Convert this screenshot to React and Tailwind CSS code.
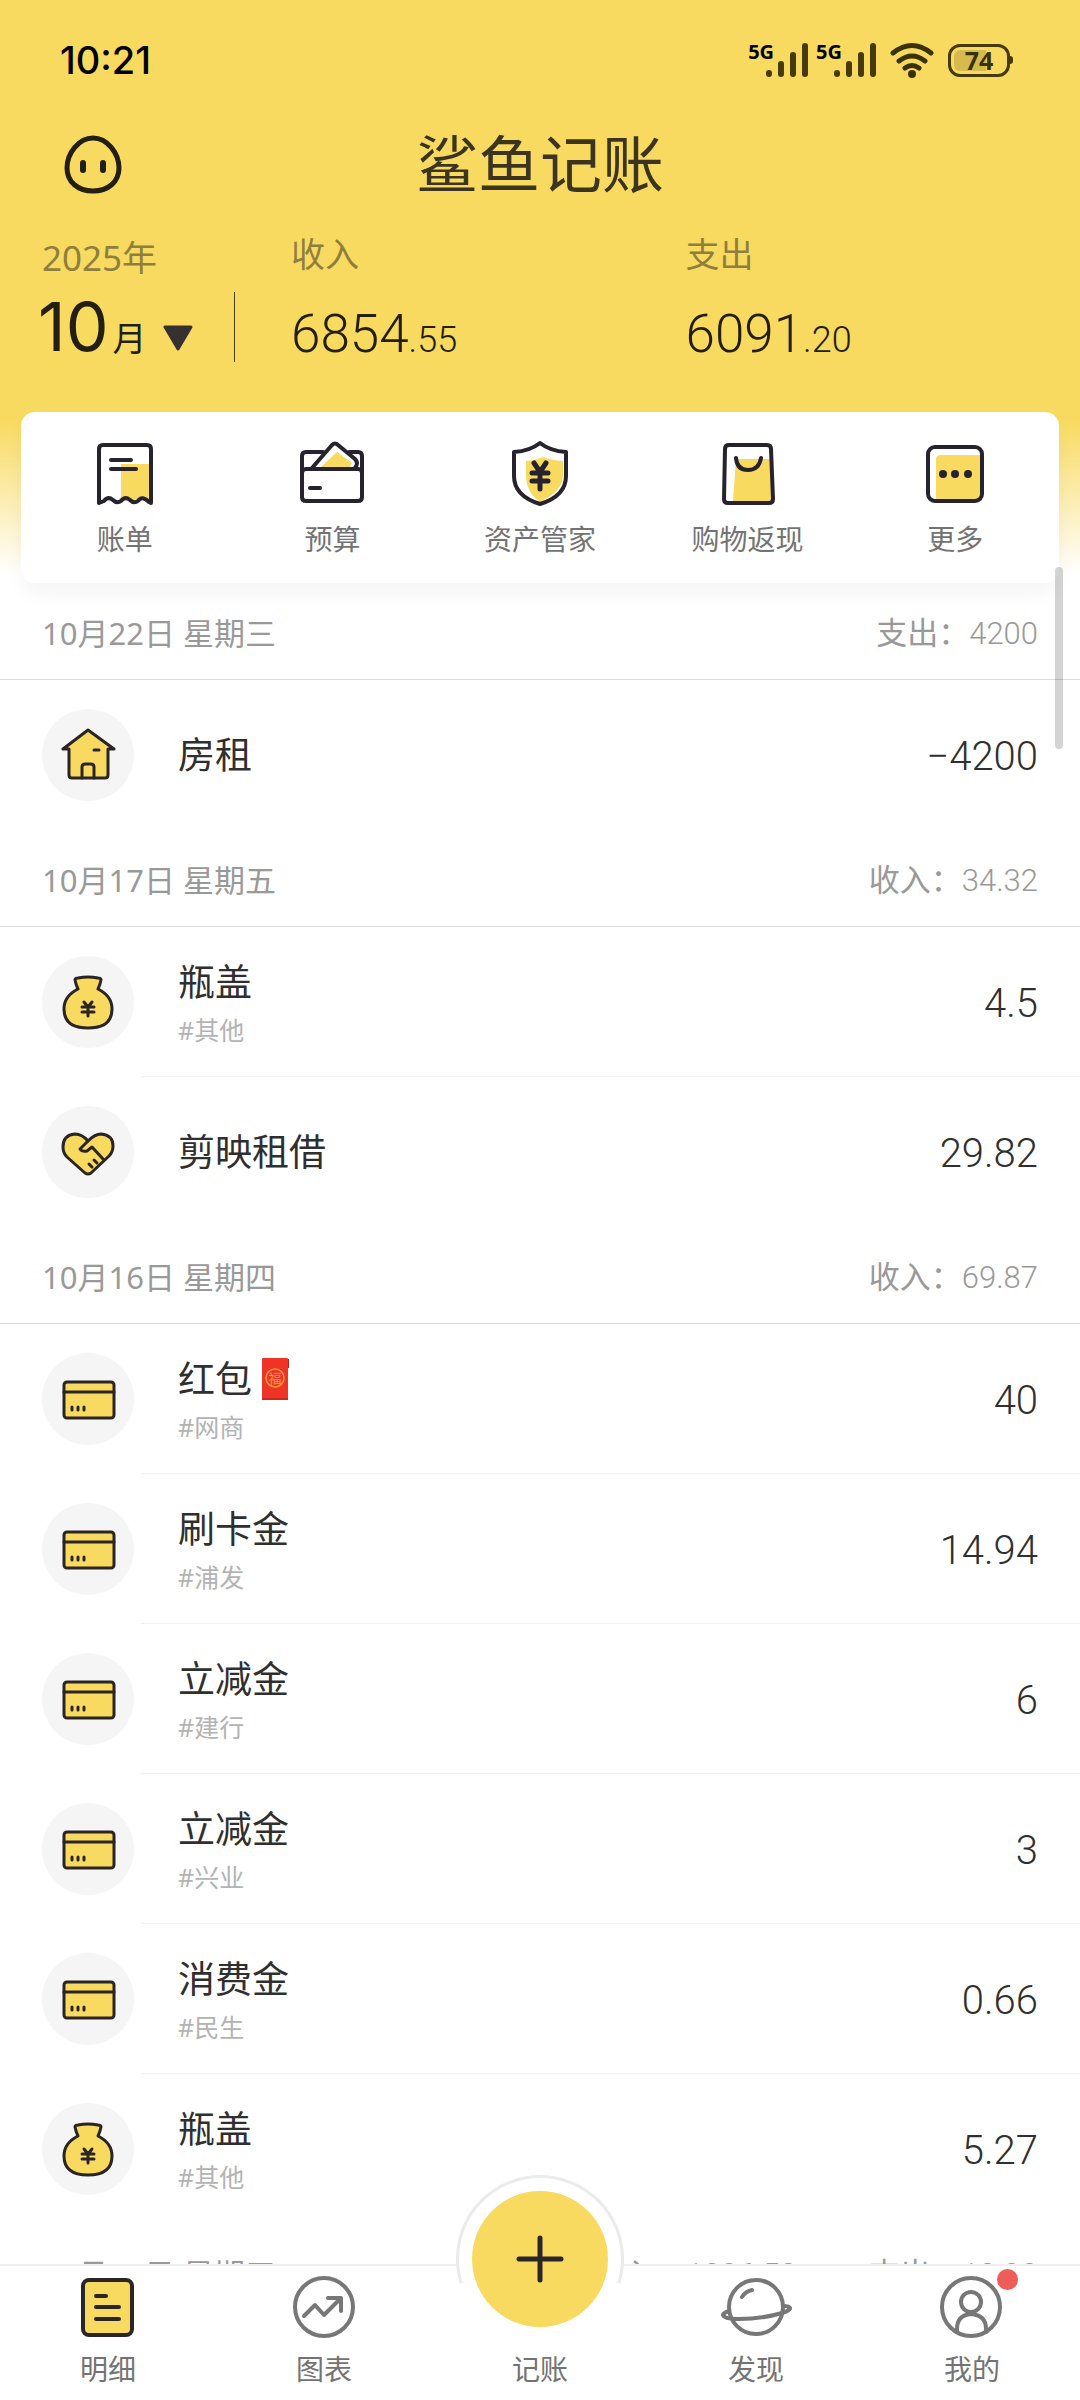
import React, { useState } from "react";

const CATEGORY_ICONS = {
  house: (
    <>
      <path d="M9 22v26q0 3 3 3h33q3 0 3-3V22h6L28 3 3 22z" fill="#f8da60" />
      <path d="M22 51V40q0-3 3-3h6q3 0 3 3v11M34 23h5" />
    </>
  ),
  bag: (
    <>
      <path d="M15 6q0-2 3-2 10-2 20 0 3 0 3 2-1 5-3 9 14 7 14 20 0 19-24 19T4 35q0-13 14-20-2-4-3-9z" fill="#f8da60" />
      <path d="M24 28l4 5 4-5M22 33h12M22 38h12M28 33v9" />
    </>
  ),
  heart: (
    <>
      <path d="M28 17q-6-7-13-7Q3 11 3 23q0 6 4 10l18 16q3 2 6 0l18-17q4-4 4-10 0-11-12-12-6 0-13 7z" fill="#f8da60" />
      <path d="M28 17l-8 8q2 3 7 2l5-4 11 12M34 36l3 3M29 40l3 3" />
    </>
  ),
  card: (
    <>
      <rect x="4" y="11" width="50" height="36" rx="3" fill="#f8da60" />
      <path d="M4 21h50M12 36v3M18 36v3M24 36v3" />
    </>
  ),
};

const days = [
  {
    date: "10月22日 星期三",
    totals: [{ label: "支出：", value: "4200" }],
    records: [{ icon: "house", name: "房租", amount: "−4200" }],
  },
  {
    date: "10月17日 星期五",
    totals: [{ label: "收入：", value: "34.32" }],
    records: [
      { icon: "bag", name: "瓶盖", tag: "#其他", amount: "4.5" },
      { icon: "heart", name: "剪映租借", amount: "29.82" },
    ],
  },
  {
    date: "10月16日 星期四",
    totals: [{ label: "收入：", value: "69.87" }],
    records: [
      { icon: "card", name: "红包", tag: "#网商", amount: "40", envelope: true },
      { icon: "card", name: "刷卡金", tag: "#浦发", amount: "14.94" },
      { icon: "card", name: "立减金", tag: "#建行", amount: "6" },
      { icon: "card", name: "立减金", tag: "#兴业", amount: "3" },
      { icon: "card", name: "消费金", tag: "#民生", amount: "0.66" },
      { icon: "bag", name: "瓶盖", tag: "#其他", amount: "5.27" },
    ],
  },
  {
    date: "10月15日 星期三",
    totals: [
      { label: "收入：", value: "1286.50" },
      { label: "支出：", value: "12.98" },
    ],
    records: [],
  },
];

const shortcuts = [
  {
    label: "账单",
    icon: (
      <>
        <path d="M28 22h29v38l-8-4-8 4-9-4-4 2z" fill="#f8da60" stroke="none" />
        <path d="M6 61V7q0-4 4-4h44q4 0 4 4v54l-2-1q-7-7-11-1-4 3-8-1-5-4-9 1-4 3-8-1-5-4-9 1zM18 18h20M18 27h25" />
      </>
    ),
  },
  {
    label: "预算",
    icon: (
      <>
        <path d="M20 26L37 10l15 11-3 5z" fill="#f8da60" stroke="none" />
        <path d="M23 10H6q-4 0-4 4v41q0 4 4 4h52q4 0 4-4V14q0-4-4-4h-9M2 31q0-4 4-4h52q4 0 4 4M12 26L32 3q3-3 6 0l17 14q4 4 0 9M10 46h10" />
      </>
    ),
  },
  {
    label: "资产管家",
    icon: (
      <>
        <path d="M18 19q10-1 17-4 8 3 20 4v14q0 16-23 27Q18 50 18 33z" fill="#f8da60" stroke="none" />
        <path d="M32 1q10 8 26 9v24q0 20-26 28Q6 54 6 34V10q16-1 26-9z" />
        <path d="M26 21l6 9 6-9M24 31h16M24 39h16M32 31v16" strokeWidth="5" />
      </>
    ),
  },
  {
    label: "购物返现",
    icon: (
      <>
        <path d="M20 17h35l2 42H17z" fill="#f8da60" stroke="none" />
        <path d="M13 3h38q4 0 4 4l2 50q0 4-4 4H12q-4 0-4-4L9 7q0-4 4-4zM20 16q1 12 12 12t13-12" />
      </>
    ),
  },
  {
    label: "更多",
    icon: (
      <>
        <path d="M13 59V18q0-5 5-5h41v46z" fill="#f8da60" stroke="none" />
        <rect x="5" y="5" width="54" height="54" rx="7" />
        <g fill="#26232f" stroke="none">
          <circle cx="20" cy="32" r="4" />
          <circle cx="32" cy="32" r="4" />
          <circle cx="45" cy="32" r="4" />
        </g>
      </>
    ),
  },
];

const tabs = [
  {
    label: "明细",
    icon: (
      <g stroke="#2b2626">
        <rect x="11" y="5" width="49" height="55" rx="6" fill="#f8da60" />
        <path d="M24 21h10M24 32h23M24 44h23" />
      </g>
    ),
  },
  {
    label: "图表",
    icon: (
      <>
        <circle cx="36" cy="32" r="29" />
        <path d="M16 41l11-11 9 10 16-16M40 23h13v13" />
      </>
    ),
  },
  { label: "记账", add: true },
  {
    label: "发现",
    icon: (
      <>
        <circle cx="36" cy="32" r="27" />
        <path d="M9 36q-6 2-6 4 1 4 16 4 23 0 43-6 9-3 8-5-1-2-7-2M22 22q4-6 10-7" />
      </>
    ),
  },
  {
    label: "我的",
    dot: true,
    icon: (
      <>
        <circle cx="35" cy="32" r="29" />
        <circle cx="35" cy="27" r="10" />
        <path d="M21 57v-3q0-14 14-15 15 1 15 15v3" />
      </>
    ),
  },
];

const Signal = () => (
  <div className="flex items-start">
    <span className="text-xl font-bold leading-5">5G</span>
    <svg className="-ml-2 w-[42px] h-9" viewBox="0 0 42 36" stroke="#453a08" strokeWidth="6" strokeLinecap="round">
      <path d="M3 31v1M15 22v10M27 13v19M39 4v28" />
    </svg>
  </div>
);

const StatusBar = () => (
  <div className="h-[120px] pl-[60px] pr-[67px] flex items-center justify-between text-black">
    <time className="font-[Inter] text-[38px] font-medium">10:21</time>
    <div className="flex items-center gap-2">
      <Signal />
      <Signal />
      <svg className="ml-1.5 w-11 h-9" viewBox="0 0 44 36" fill="none" stroke="#3b3106" strokeWidth="5" strokeLinecap="round">
        <path d="M3 11q19-15 38 0M9 19q13-10 26 0M15 26q7-5 14 0" />
        <circle cx="22" cy="32" r="4" fill="#3b3106" stroke="none" />
      </svg>
      <div className="ml-1.5 flex items-center">
        <div className="relative w-[62px] h-[33px] rounded-xl border-3 border-[#453a08] flex items-center justify-center">
          <div className="absolute left-[3px] inset-y-[3px] w-8 rounded-l-md bg-[#d6ba4e]" />
          <span className="relative text-[25px] leading-none font-bold text-[#3b3106]">74</span>
        </div>
        <div className="w-[3px] h-2 rounded-r bg-[#453a08]" />
      </div>
    </div>
  </div>
);

const Summary = ({ label, whole, cents }) => (
  <div className="flex-1 flex flex-col gap-6">
    <span className="text-[34px] leading-[48px] text-[#8f7f3e]">{label}</span>
    <span className="h-16 font-[Roboto] font-light text-[53px] leading-[64px] text-[#241d08]">
      {whole}
      <span className="text-[36px]">{cents}</span>
    </span>
  </div>
);

const RedEnvelope = () => (
  <svg className="w-7 h-[42px]" viewBox="0 0 28 42">
    <path d="M24 1h3v9h-3z" fill="#b3241d" />
    <rect width="26" height="42" rx="1" fill="#ef3427" />
    <path d="M0 41h26" stroke="#c4281f" strokeWidth="2" />
    <circle cx="13" cy="20" r="9" fill="none" stroke="#f99a3c" strokeWidth="1.5" />
    <text x="13" y="25" fontSize="13" textAnchor="middle" fill="#f99a3c">福</text>
  </svg>
);

const RecordRow = ({ record, last }) => (
  <li className="relative h-[150px] px-[42px] flex items-center">
    <div className="size-[92px] rounded-full bg-[#f5f5f5] flex items-center justify-center">
      <svg
        className="size-14"
        viewBox="0 0 56 56"
        fill="none"
        stroke="#2a2422"
        strokeWidth="3"
        strokeLinecap="round"
        strokeLinejoin="round"
      >
        {CATEGORY_ICONS[record.icon]}
      </svg>
    </div>
    <div className="ml-11 flex-1">
      <div className="flex items-center gap-2.5 text-[37px] leading-[52px] text-[#2f2f2f]">
        {record.name}
        {record.envelope && <RedEnvelope />}
      </div>
      {record.tag && <div className="mt-1 text-[25px] leading-9 text-[#b3b3b3]">{record.tag}</div>}
    </div>
    <span className="pt-1 font-[Roboto] font-light text-[40px] text-[#2f2f2f]">{record.amount}</span>
    {!last && <div className="absolute bottom-0 left-[141px] right-0 h-px bg-[#f2f2f2]" />}
  </li>
);

const App = () => {
  const [activeTab, setActiveTab] = useState("明细");

  return (
    <div className="h-screen flex flex-col bg-white font-['Noto_Sans','Noto_Sans_CJK_SC',sans-serif]">
      <header className="relative z-10 bg-[linear-gradient(#f8da60_420px,#fff_575px)]">
        <StatusBar />

        <div className="relative h-[88px] flex items-center justify-center">
          <button className="absolute left-[64px]" aria-label="头像">
            <svg className="w-[58px] h-[60px]" viewBox="0 0 58 60" fill="none" stroke="#231f12" strokeLinecap="round">
              <path d="M29 4c14 0 26 15 26 30 0 14-11 23-26 23S3 48 3 34C3 19 15 4 29 4z" strokeWidth="5" />
              <path d="M19 29v7M39 29v7" strokeWidth="6" />
            </svg>
          </button>
          <h1 className="text-[62px] leading-none text-[#3a3420]">鲨鱼记账</h1>
        </div>

        <div className="mt-[22px] flex items-end">
          <button className="relative w-[291px] pl-[42px] flex flex-col items-start gap-1">
            <span className="text-[35px] leading-[48px] text-[#8f7f3e]">2025年</span>
            <span className="-ml-1 flex items-baseline h-20 text-[#231f12]">
              <span className="font-[Inter] text-[68px] leading-[80px]">10</span>
              <span className="ml-1 text-[34px]">月</span>
              <svg className="ml-4 w-[30px] h-[26px]" viewBox="0 0 30 26">
                <path d="M2 2h26L15 24z" fill="#353131" stroke="#353131" strokeWidth="3" strokeLinejoin="round" />
              </svg>
            </span>
            <span className="absolute left-[234px] bottom-1 h-[70px] w-px bg-[#4a3f16]" />
          </button>
          <Summary label="收入" whole="6854" cents=".55" />
          <Summary label="支出" whole="6091" cents=".20" />
        </div>

        <div className="mt-[46px] mx-[21px] pt-[30px] pb-6 grid grid-cols-5 rounded-[14px] bg-white shadow-[0_12px_20px_rgba(0,0,0,0.04)]">
          {shortcuts.map((item) => (
            <button key={item.label} className="flex flex-col items-center gap-[13px]">
              <svg
                className="size-16 overflow-visible"
                viewBox="0 0 64 64"
                fill="none"
                stroke="#26232f"
                strokeWidth="4"
                strokeLinecap="round"
                strokeLinejoin="round"
              >
                {item.icon}
              </svg>
              <span className="text-[28px] leading-10 text-[#737373]">{item.label}</span>
            </button>
          ))}
        </div>
      </header>

      <main className="flex-1 min-h-0 overflow-y-auto [scrollbar-width:none]">
        {days.map((day) => (
          <section key={day.date}>
            <div className="h-[97px] pt-1 px-[42px] flex items-center border-b border-[#dcdcdc] text-[31px] text-[#999]">
              <h2 className="flex-1">{day.date}</h2>
              <div className="flex gap-[72px]">
                {day.totals.map((total) => (
                  <span key={total.label}>
                    {total.label}
                    <span className="font-[Roboto] font-light">{total.value}</span>
                  </span>
                ))}
              </div>
            </div>
            <ul>
              {day.records.map((record, index) => (
                <RecordRow key={index} record={record} last={index === day.records.length - 1} />
              ))}
            </ul>
          </section>
        ))}
      </main>

      {/* Scroll indicator */}
      <div className="absolute z-20 top-[567px] right-[17px] w-2 h-[182px] rounded-full bg-black/17" />

      <nav className="relative z-10 pt-[9px] pb-[11px] grid grid-cols-5 bg-white border-t-2 border-[#f0f0f0]">
        {tabs.map((tab) => (
          <button
            key={tab.label}
            onClick={() => setActiveTab(tab.label)}
            aria-current={activeTab === tab.label ? "page" : undefined}
            className="relative flex flex-col items-center justify-end gap-2.5"
          >
            {tab.add ? (
              <>
                <span className="absolute -top-[100px] w-[168px] h-[108px] overflow-hidden">
                  <span className="block size-[168px] rounded-full bg-white border-3 border-[#ebebeb]" />
                </span>
                <span className="absolute -top-[84px] size-[136px] rounded-full bg-[#f8da60] flex items-center justify-center">
                  <svg className="size-12" viewBox="0 0 48 48" stroke="#2b2626" strokeWidth="5" strokeLinecap="round">
                    <path d="M24 3v42M3 24h42" />
                  </svg>
                </span>
              </>
            ) : (
              <span className="relative">
                <svg
                  className="w-[72px] h-16"
                  viewBox="0 0 72 64"
                  fill="none"
                  stroke="#777"
                  strokeWidth="4"
                  strokeLinecap="round"
                  strokeLinejoin="round"
                >
                  {tab.icon}
                </svg>
                {tab.dot && <span className="absolute left-[61px] -top-1.5 size-[21px] rounded-full bg-[#ee5e58]" />}
              </span>
            )}
            <span className="text-[28px] leading-10 text-[#737373]">{tab.label}</span>
          </button>
        ))}
      </nav>
    </div>
  );
};

export default App;
